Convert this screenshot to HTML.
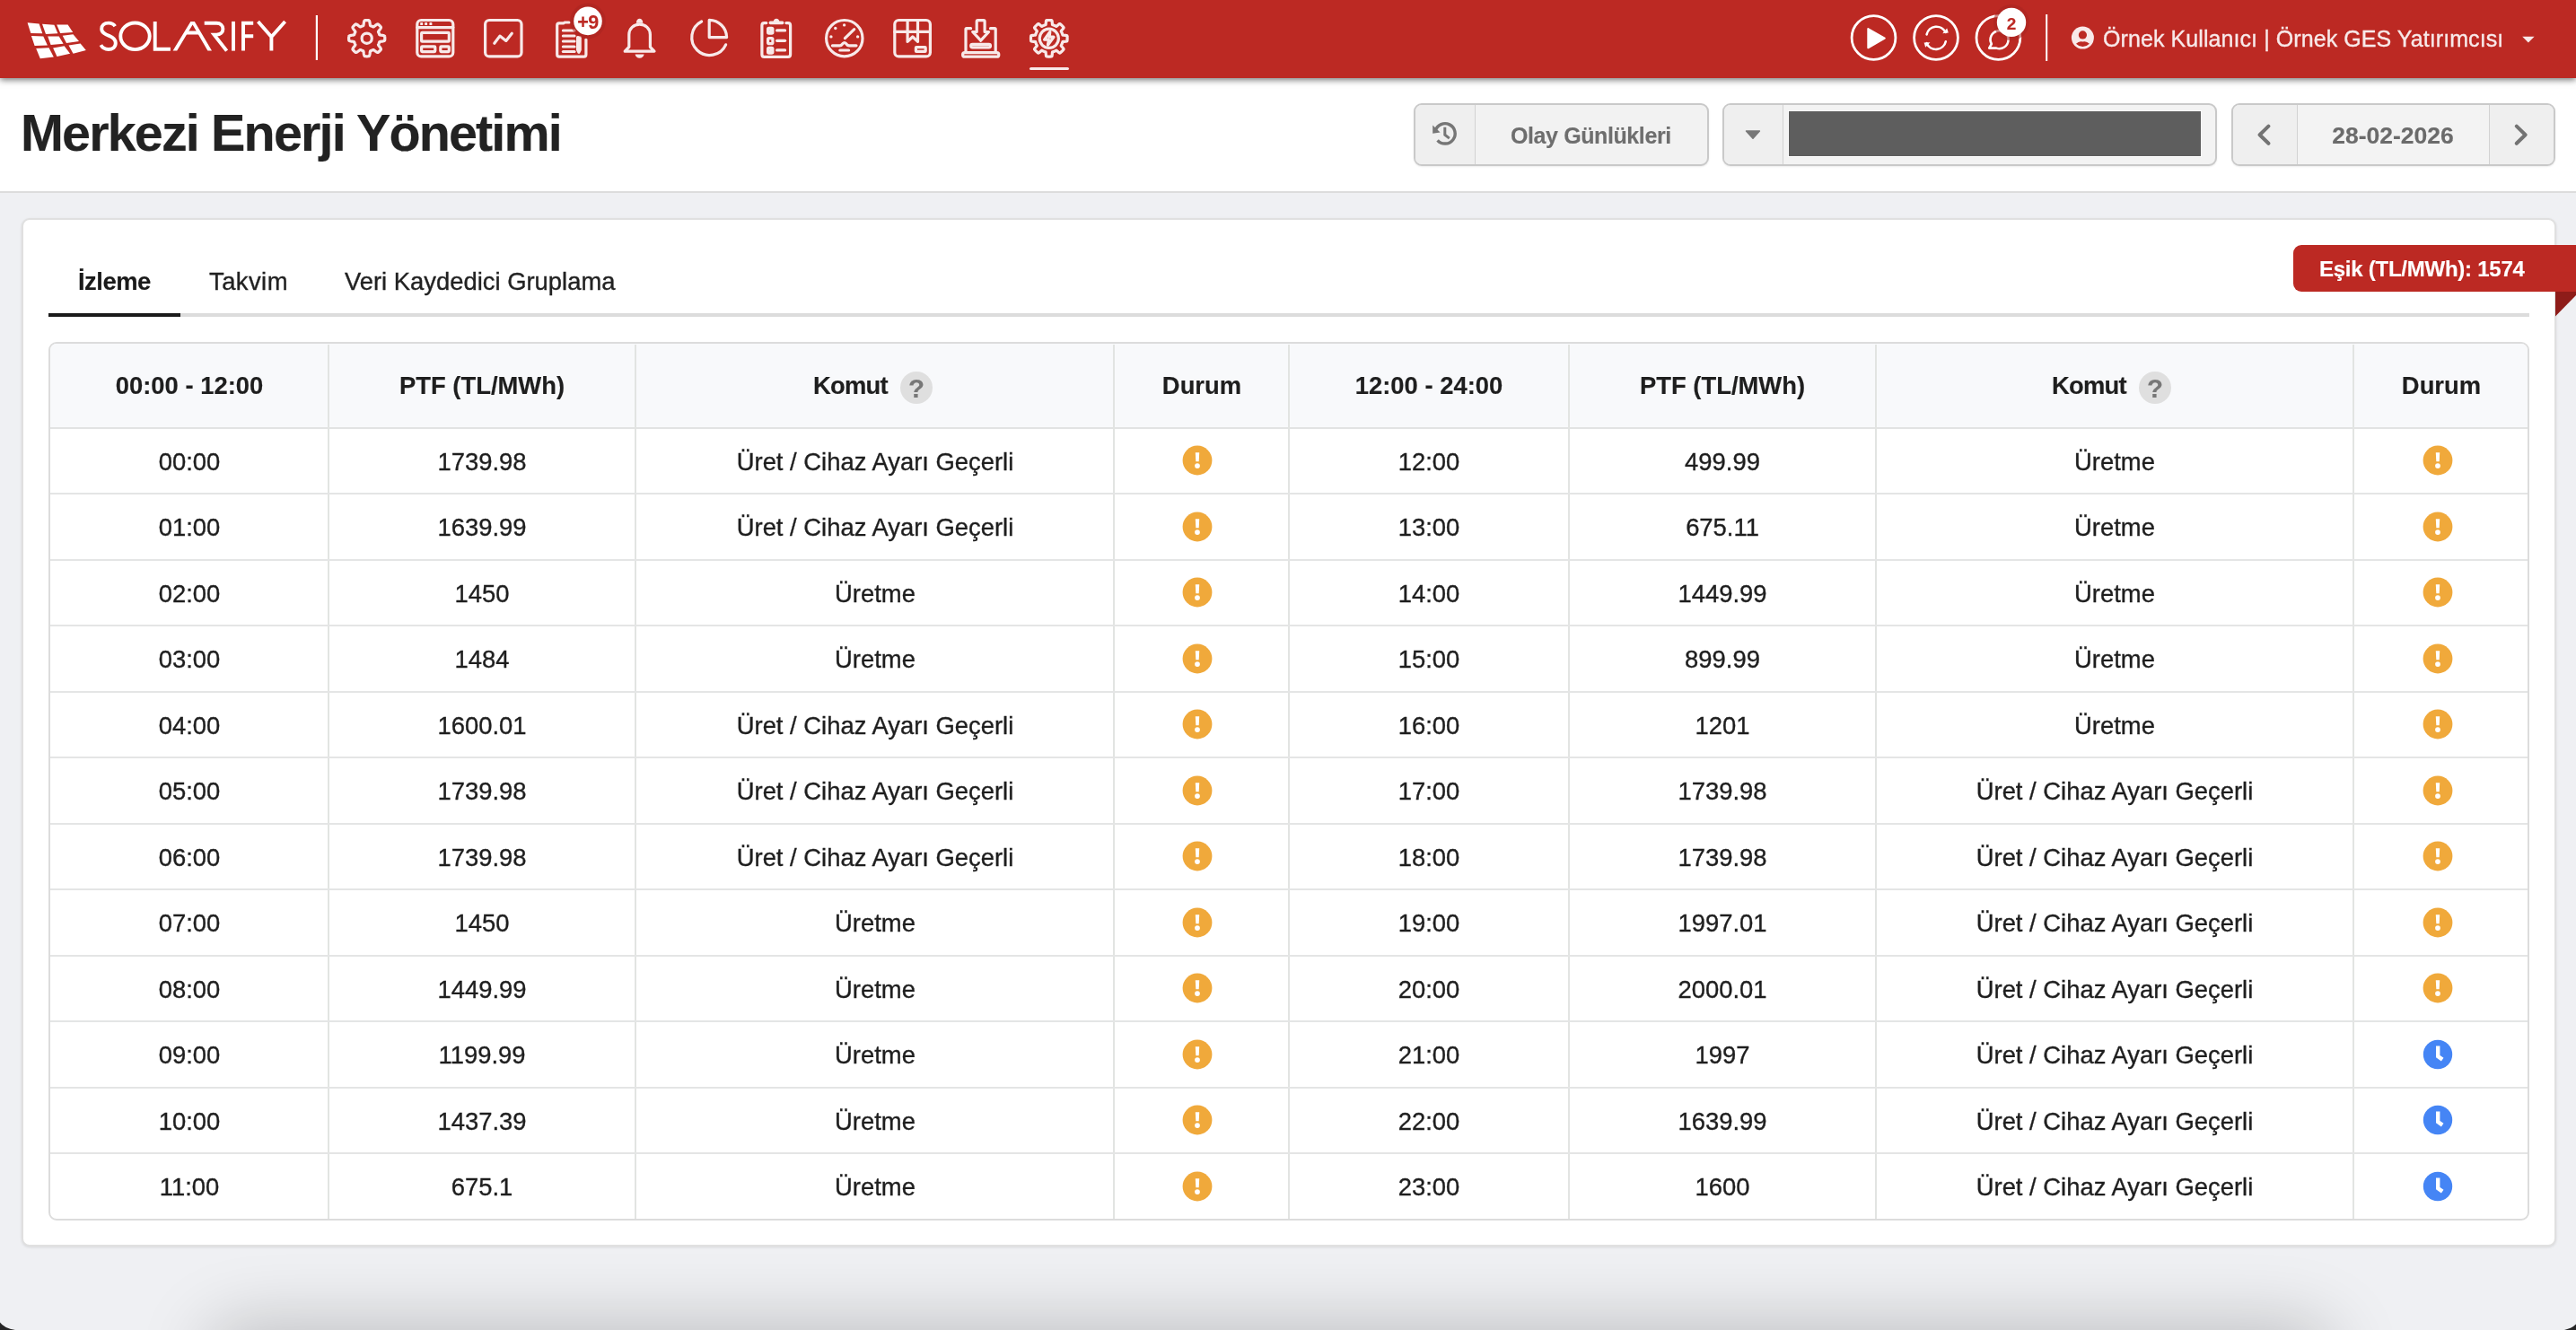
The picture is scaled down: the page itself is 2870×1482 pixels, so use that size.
<!DOCTYPE html><html><head><meta charset="utf-8"><title>Merkezi Enerji Yönetimi</title><style>
html,body{margin:0;padding:0;width:2870px;height:1482px;overflow:hidden;background:#1e1e1e;font-family:"Liberation Sans", sans-serif;}
#win{position:absolute;left:0;top:0;width:2870px;height:1482px;background:#eff0f3;overflow:hidden;}
.ab{position:absolute;}
</style></head><body><div id="win">
<div class="ab" style="left:0;top:87px;width:2870px;height:126px;background:#fff;border-bottom:2px solid #dcdcdc;"></div>
<div style="position:absolute;will-change:transform;-webkit-text-stroke:0.15px #222222;top:115.16px;font-size:57.5px;line-height:66.07px;font-weight:bold;color:#222222;white-space:nowrap;letter-spacing:-1.85px;left:22.80px;">Merkezi Enerji Yönetimi</div>
<div class="ab" style="left:1575px;top:115px;width:325px;height:66px;border:2px solid #c9c9c9;border-radius:9px;background:#f2f2f2;overflow:hidden;box-shadow:0 1px 2px rgba(0,0,0,0.08);"><div class="ab" style="left:0;top:0;width:66px;height:66px;background:#efefef;border-right:1.5px solid #d2d2d2;"></div></div>
<svg class="ab" style="left:1590px;top:130px" width="40" height="40" viewBox="0 0 40 40"><path fill="none" stroke="#767676" stroke-width="3.4" d="M11.6,26.3 A11.2,11.2 0 1 0 9.2,15.8"/><path fill="#767676" d="M6.2,9.6 L6.2,18.8 L14.6,17.6 Z"/><path fill="none" stroke="#767676" stroke-width="3" stroke-linecap="square" d="M19.8,13.2 V20.2 L23.6,23.2"/></svg>
<div style="position:absolute;will-change:transform;-webkit-text-stroke:0.15px #6e6e6e;top:136.68px;font-size:25px;line-height:28.73px;font-weight:bold;color:#6e6e6e;white-space:nowrap;letter-spacing:-0.4px;left:1682.80px;">Olay Günlükleri</div>
<div class="ab" style="left:1919px;top:115px;width:547px;height:66px;border:2px solid #c9c9c9;border-radius:9px;background:#f3f3f3;overflow:hidden;box-shadow:0 1px 2px rgba(0,0,0,0.08);"><div class="ab" style="left:0;top:0;width:64.5px;height:66px;background:#efefef;border-right:1.5px solid #d2d2d2;"></div><div class="ab" style="left:71px;top:5.5px;width:459px;height:50px;background:#5e5e5e;border:1px solid #fff;"></div></div>
<svg class="ab" style="left:1940px;top:140px" width="26" height="20" viewBox="0 0 26 20"><path fill="#777" stroke="#777" stroke-width="1.5" stroke-linejoin="round" d="M5.5,6 H20.4 L13,14.2 Z"/></svg>
<div class="ab" style="left:2486px;top:115px;width:357px;height:66px;border:2px solid #c9c9c9;border-radius:9px;background:#f3f3f3;overflow:hidden;box-shadow:0 1px 2px rgba(0,0,0,0.08);"><div class="ab" style="left:0;top:0;width:71px;height:66px;background:#efefef;border-right:1.5px solid #d2d2d2;"></div><div class="ab" style="left:285px;top:0;width:72px;height:66px;background:#efefef;border-left:1.5px solid #d2d2d2;"></div></div>
<svg class="ab" style="left:2505px;top:130px" width="330" height="40" viewBox="2505 130 330 40"><path fill="none" stroke="#737373" stroke-width="4" stroke-linecap="round" stroke-linejoin="round" d="M2527.4,140.6 L2517.6,150.2 L2527.4,159.8 M2803.8,140.6 L2813.6,150.2 L2803.8,159.8"/></svg>
<div style="position:absolute;will-change:transform;-webkit-text-stroke:0.15px #6b6b6b;top:135.72px;font-size:26.5px;line-height:30.45px;font-weight:bold;color:#6b6b6b;white-space:nowrap;left:666.40px;width:4000px;text-align:center;">28-02-2026</div>
<div class="ab" style="left:24px;top:243px;width:2820px;height:1142px;background:#fff;border:2px solid #e0e0e0;border-radius:9px;box-shadow:0 1px 3px rgba(0,0,0,0.10);"></div>
<div class="ab" style="left:54px;top:349px;width:2764px;height:4px;background:#dcdcdc;"></div>
<div class="ab" style="left:54px;top:349px;width:147px;height:4px;background:#1a1a1a;"></div>
<div style="position:absolute;will-change:transform;-webkit-text-stroke:0.15px #1a1a1a;top:297.70px;font-size:27.4px;line-height:31.48px;font-weight:bold;color:#1a1a1a;white-space:nowrap;letter-spacing:-0.5px;left:87.40px;">İzleme</div>
<div style="position:absolute;will-change:transform;-webkit-text-stroke:0.35px #222;top:297.70px;font-size:27.4px;line-height:31.48px;font-weight:normal;color:#222;white-space:nowrap;letter-spacing:0.45px;left:232.60px;">Takvim</div>
<div style="position:absolute;will-change:transform;-webkit-text-stroke:0.35px #222;top:297.70px;font-size:27.4px;line-height:31.48px;font-weight:normal;color:#222;white-space:nowrap;left:383.50px;">Veri Kaydedici Gruplama</div>
<div class="ab" style="left:2555px;top:273px;width:315px;height:52px;background:#bc2923;border-radius:9px 0 0 9px;"></div>
<svg class="ab" style="left:2847px;top:325px" width="23" height="28" viewBox="0 0 23 28"><path fill="#8e1c19" d="M0,0 H23 V4 L0,27.5 Z"/></svg>
<div style="position:absolute;will-change:transform;-webkit-text-stroke:0.15px #ffffff;top:286.28px;font-size:24px;line-height:27.58px;font-weight:bold;color:#ffffff;white-space:nowrap;letter-spacing:-0.25px;left:2584.00px;">Eşik (TL/MWh): 1574</div>
<div class="ab" style="left:54px;top:381px;width:2760px;height:975px;border:2px solid #dcdcdc;border-radius:9px;background:#fff;overflow:hidden;"><div class="ab" style="left:0;top:0;width:2760px;height:93px;background:#f8f9fb;border-bottom:2px solid #e2e3e3;"></div></div>
<div class="ab" style="left:365px;top:384px;width:2px;height:974px;background:#e2e4e2;"></div>
<div class="ab" style="left:707px;top:384px;width:2px;height:974px;background:#e2e4e2;"></div>
<div class="ab" style="left:1240px;top:384px;width:2px;height:974px;background:#e2e4e2;"></div>
<div class="ab" style="left:1435px;top:384px;width:2px;height:974px;background:#e2e4e2;"></div>
<div class="ab" style="left:1747px;top:384px;width:2px;height:974px;background:#e2e4e2;"></div>
<div class="ab" style="left:2089px;top:384px;width:2px;height:974px;background:#e2e4e2;"></div>
<div class="ab" style="left:2621px;top:384px;width:2px;height:974px;background:#e2e4e2;"></div>
<div class="ab" style="left:56px;top:549px;width:2760px;height:2px;background:#e4e5e5;"></div>
<div class="ab" style="left:56px;top:623px;width:2760px;height:2px;background:#e4e5e5;"></div>
<div class="ab" style="left:56px;top:696px;width:2760px;height:2px;background:#e4e5e5;"></div>
<div class="ab" style="left:56px;top:770px;width:2760px;height:2px;background:#e4e5e5;"></div>
<div class="ab" style="left:56px;top:843px;width:2760px;height:2px;background:#e4e5e5;"></div>
<div class="ab" style="left:56px;top:917px;width:2760px;height:2px;background:#e4e5e5;"></div>
<div class="ab" style="left:56px;top:990px;width:2760px;height:2px;background:#e4e5e5;"></div>
<div class="ab" style="left:56px;top:1064px;width:2760px;height:2px;background:#e4e5e5;"></div>
<div class="ab" style="left:56px;top:1137px;width:2760px;height:2px;background:#e4e5e5;"></div>
<div class="ab" style="left:56px;top:1211px;width:2760px;height:2px;background:#e4e5e5;"></div>
<div class="ab" style="left:56px;top:1284px;width:2760px;height:2px;background:#e4e5e5;"></div>
<div style="position:absolute;will-change:transform;-webkit-text-stroke:0.15px #1e1e1e;top:414.00px;font-size:27.4px;line-height:31.48px;font-weight:bold;color:#1e1e1e;white-space:nowrap;left:-1789.50px;width:4000px;text-align:center;">00:00 - 12:00</div>
<div style="position:absolute;will-change:transform;-webkit-text-stroke:0.15px #1e1e1e;top:414.00px;font-size:27.4px;line-height:31.48px;font-weight:bold;color:#1e1e1e;white-space:nowrap;left:-1463.00px;width:4000px;text-align:center;">PTF (TL/MWh)</div>
<div style="position:absolute;will-change:transform;-webkit-text-stroke:0.15px #1e1e1e;top:414.00px;font-size:27.4px;line-height:31.48px;font-weight:bold;color:#1e1e1e;white-space:nowrap;left:-661.50px;width:4000px;text-align:center;">Durum</div>
<div style="position:absolute;will-change:transform;-webkit-text-stroke:0.15px #1e1e1e;top:414.00px;font-size:27.4px;line-height:31.48px;font-weight:bold;color:#1e1e1e;white-space:nowrap;left:-408.00px;width:4000px;text-align:center;">12:00 - 24:00</div>
<div style="position:absolute;will-change:transform;-webkit-text-stroke:0.15px #1e1e1e;top:414.00px;font-size:27.4px;line-height:31.48px;font-weight:bold;color:#1e1e1e;white-space:nowrap;left:-81.00px;width:4000px;text-align:center;">PTF (TL/MWh)</div>
<div style="position:absolute;will-change:transform;-webkit-text-stroke:0.15px #1e1e1e;top:414.00px;font-size:27.4px;line-height:31.48px;font-weight:bold;color:#1e1e1e;white-space:nowrap;left:719.50px;width:4000px;text-align:center;">Durum</div>
<div style="position:absolute;will-change:transform;-webkit-text-stroke:0.15px #1e1e1e;top:414.00px;font-size:27.4px;line-height:31.48px;font-weight:bold;color:#1e1e1e;white-space:nowrap;letter-spacing:-0.8px;left:906.00px;">Komut</div><div class="ab" style="left:1002.9px;top:413.9px;width:36px;height:36px;border-radius:18px;background:#dfdfdf;"></div><div style="position:absolute;will-change:transform;-webkit-text-stroke:0.15px #777777;top:416.10px;font-size:29.5px;line-height:33.90px;font-weight:bold;color:#777777;white-space:nowrap;left:-978.80px;width:4000px;text-align:center;">?</div>
<div style="position:absolute;will-change:transform;-webkit-text-stroke:0.15px #1e1e1e;top:414.00px;font-size:27.4px;line-height:31.48px;font-weight:bold;color:#1e1e1e;white-space:nowrap;letter-spacing:-0.8px;left:2286.00px;">Komut</div><div class="ab" style="left:2383px;top:413.9px;width:36px;height:36px;border-radius:18px;background:#dfdfdf;"></div><div style="position:absolute;will-change:transform;-webkit-text-stroke:0.15px #777777;top:416.10px;font-size:29.5px;line-height:33.90px;font-weight:bold;color:#777777;white-space:nowrap;left:401.30px;width:4000px;text-align:center;">?</div>
<div style="position:absolute;will-change:transform;-webkit-text-stroke:0.35px #1e1e1e;top:498.80px;font-size:27.4px;line-height:31.48px;font-weight:normal;color:#1e1e1e;white-space:nowrap;left:-1789.50px;width:4000px;text-align:center;">00:00</div>
<div style="position:absolute;will-change:transform;-webkit-text-stroke:0.35px #1e1e1e;top:498.80px;font-size:27.4px;line-height:31.48px;font-weight:normal;color:#1e1e1e;white-space:nowrap;left:-1463.00px;width:4000px;text-align:center;">1739.98</div>
<div style="position:absolute;will-change:transform;-webkit-text-stroke:0.35px #1e1e1e;top:498.80px;font-size:27.4px;line-height:31.48px;font-weight:normal;color:#1e1e1e;white-space:nowrap;left:-1025.50px;width:4000px;text-align:center;">Üret / Cihaz Ayarı Geçerli</div>
<svg class="ab" style="left:1317.4px;top:496.29999999999995px" width="34" height="34" viewBox="0 0 34 34"><circle cx="17" cy="17" r="16.4" fill="#f0a93b"/><path fill="#fff" d="M14.8,8.2 H19.2 L18.7,18.3 H15.3 Z"/><circle cx="17" cy="23.1" r="2.9" fill="#fff"/></svg>
<div style="position:absolute;will-change:transform;-webkit-text-stroke:0.35px #1e1e1e;top:498.80px;font-size:27.4px;line-height:31.48px;font-weight:normal;color:#1e1e1e;white-space:nowrap;left:-408.00px;width:4000px;text-align:center;">12:00</div>
<div style="position:absolute;will-change:transform;-webkit-text-stroke:0.35px #1e1e1e;top:498.80px;font-size:27.4px;line-height:31.48px;font-weight:normal;color:#1e1e1e;white-space:nowrap;left:-81.00px;width:4000px;text-align:center;">499.99</div>
<div style="position:absolute;will-change:transform;-webkit-text-stroke:0.35px #1e1e1e;top:498.80px;font-size:27.4px;line-height:31.48px;font-weight:normal;color:#1e1e1e;white-space:nowrap;left:356.00px;width:4000px;text-align:center;">Üretme</div>
<svg class="ab" style="left:2699px;top:496.29999999999995px" width="34" height="34" viewBox="0 0 34 34"><circle cx="17" cy="17" r="16.4" fill="#f0a93b"/><path fill="#fff" d="M14.8,8.2 H19.2 L18.7,18.3 H15.3 Z"/><circle cx="17" cy="23.1" r="2.9" fill="#fff"/></svg>
<div style="position:absolute;will-change:transform;-webkit-text-stroke:0.35px #1e1e1e;top:572.30px;font-size:27.4px;line-height:31.48px;font-weight:normal;color:#1e1e1e;white-space:nowrap;left:-1789.50px;width:4000px;text-align:center;">01:00</div>
<div style="position:absolute;will-change:transform;-webkit-text-stroke:0.35px #1e1e1e;top:572.30px;font-size:27.4px;line-height:31.48px;font-weight:normal;color:#1e1e1e;white-space:nowrap;left:-1463.00px;width:4000px;text-align:center;">1639.99</div>
<div style="position:absolute;will-change:transform;-webkit-text-stroke:0.35px #1e1e1e;top:572.30px;font-size:27.4px;line-height:31.48px;font-weight:normal;color:#1e1e1e;white-space:nowrap;left:-1025.50px;width:4000px;text-align:center;">Üret / Cihaz Ayarı Geçerli</div>
<svg class="ab" style="left:1317.4px;top:569.8px" width="34" height="34" viewBox="0 0 34 34"><circle cx="17" cy="17" r="16.4" fill="#f0a93b"/><path fill="#fff" d="M14.8,8.2 H19.2 L18.7,18.3 H15.3 Z"/><circle cx="17" cy="23.1" r="2.9" fill="#fff"/></svg>
<div style="position:absolute;will-change:transform;-webkit-text-stroke:0.35px #1e1e1e;top:572.30px;font-size:27.4px;line-height:31.48px;font-weight:normal;color:#1e1e1e;white-space:nowrap;left:-408.00px;width:4000px;text-align:center;">13:00</div>
<div style="position:absolute;will-change:transform;-webkit-text-stroke:0.35px #1e1e1e;top:572.30px;font-size:27.4px;line-height:31.48px;font-weight:normal;color:#1e1e1e;white-space:nowrap;left:-81.00px;width:4000px;text-align:center;">675.11</div>
<div style="position:absolute;will-change:transform;-webkit-text-stroke:0.35px #1e1e1e;top:572.30px;font-size:27.4px;line-height:31.48px;font-weight:normal;color:#1e1e1e;white-space:nowrap;left:356.00px;width:4000px;text-align:center;">Üretme</div>
<svg class="ab" style="left:2699px;top:569.8px" width="34" height="34" viewBox="0 0 34 34"><circle cx="17" cy="17" r="16.4" fill="#f0a93b"/><path fill="#fff" d="M14.8,8.2 H19.2 L18.7,18.3 H15.3 Z"/><circle cx="17" cy="23.1" r="2.9" fill="#fff"/></svg>
<div style="position:absolute;will-change:transform;-webkit-text-stroke:0.35px #1e1e1e;top:645.80px;font-size:27.4px;line-height:31.48px;font-weight:normal;color:#1e1e1e;white-space:nowrap;left:-1789.50px;width:4000px;text-align:center;">02:00</div>
<div style="position:absolute;will-change:transform;-webkit-text-stroke:0.35px #1e1e1e;top:645.80px;font-size:27.4px;line-height:31.48px;font-weight:normal;color:#1e1e1e;white-space:nowrap;left:-1463.00px;width:4000px;text-align:center;">1450</div>
<div style="position:absolute;will-change:transform;-webkit-text-stroke:0.35px #1e1e1e;top:645.80px;font-size:27.4px;line-height:31.48px;font-weight:normal;color:#1e1e1e;white-space:nowrap;left:-1025.50px;width:4000px;text-align:center;">Üretme</div>
<svg class="ab" style="left:1317.4px;top:643.3px" width="34" height="34" viewBox="0 0 34 34"><circle cx="17" cy="17" r="16.4" fill="#f0a93b"/><path fill="#fff" d="M14.8,8.2 H19.2 L18.7,18.3 H15.3 Z"/><circle cx="17" cy="23.1" r="2.9" fill="#fff"/></svg>
<div style="position:absolute;will-change:transform;-webkit-text-stroke:0.35px #1e1e1e;top:645.80px;font-size:27.4px;line-height:31.48px;font-weight:normal;color:#1e1e1e;white-space:nowrap;left:-408.00px;width:4000px;text-align:center;">14:00</div>
<div style="position:absolute;will-change:transform;-webkit-text-stroke:0.35px #1e1e1e;top:645.80px;font-size:27.4px;line-height:31.48px;font-weight:normal;color:#1e1e1e;white-space:nowrap;left:-81.00px;width:4000px;text-align:center;">1449.99</div>
<div style="position:absolute;will-change:transform;-webkit-text-stroke:0.35px #1e1e1e;top:645.80px;font-size:27.4px;line-height:31.48px;font-weight:normal;color:#1e1e1e;white-space:nowrap;left:356.00px;width:4000px;text-align:center;">Üretme</div>
<svg class="ab" style="left:2699px;top:643.3px" width="34" height="34" viewBox="0 0 34 34"><circle cx="17" cy="17" r="16.4" fill="#f0a93b"/><path fill="#fff" d="M14.8,8.2 H19.2 L18.7,18.3 H15.3 Z"/><circle cx="17" cy="23.1" r="2.9" fill="#fff"/></svg>
<div style="position:absolute;will-change:transform;-webkit-text-stroke:0.35px #1e1e1e;top:719.30px;font-size:27.4px;line-height:31.48px;font-weight:normal;color:#1e1e1e;white-space:nowrap;left:-1789.50px;width:4000px;text-align:center;">03:00</div>
<div style="position:absolute;will-change:transform;-webkit-text-stroke:0.35px #1e1e1e;top:719.30px;font-size:27.4px;line-height:31.48px;font-weight:normal;color:#1e1e1e;white-space:nowrap;left:-1463.00px;width:4000px;text-align:center;">1484</div>
<div style="position:absolute;will-change:transform;-webkit-text-stroke:0.35px #1e1e1e;top:719.30px;font-size:27.4px;line-height:31.48px;font-weight:normal;color:#1e1e1e;white-space:nowrap;left:-1025.50px;width:4000px;text-align:center;">Üretme</div>
<svg class="ab" style="left:1317.4px;top:716.8px" width="34" height="34" viewBox="0 0 34 34"><circle cx="17" cy="17" r="16.4" fill="#f0a93b"/><path fill="#fff" d="M14.8,8.2 H19.2 L18.7,18.3 H15.3 Z"/><circle cx="17" cy="23.1" r="2.9" fill="#fff"/></svg>
<div style="position:absolute;will-change:transform;-webkit-text-stroke:0.35px #1e1e1e;top:719.30px;font-size:27.4px;line-height:31.48px;font-weight:normal;color:#1e1e1e;white-space:nowrap;left:-408.00px;width:4000px;text-align:center;">15:00</div>
<div style="position:absolute;will-change:transform;-webkit-text-stroke:0.35px #1e1e1e;top:719.30px;font-size:27.4px;line-height:31.48px;font-weight:normal;color:#1e1e1e;white-space:nowrap;left:-81.00px;width:4000px;text-align:center;">899.99</div>
<div style="position:absolute;will-change:transform;-webkit-text-stroke:0.35px #1e1e1e;top:719.30px;font-size:27.4px;line-height:31.48px;font-weight:normal;color:#1e1e1e;white-space:nowrap;left:356.00px;width:4000px;text-align:center;">Üretme</div>
<svg class="ab" style="left:2699px;top:716.8px" width="34" height="34" viewBox="0 0 34 34"><circle cx="17" cy="17" r="16.4" fill="#f0a93b"/><path fill="#fff" d="M14.8,8.2 H19.2 L18.7,18.3 H15.3 Z"/><circle cx="17" cy="23.1" r="2.9" fill="#fff"/></svg>
<div style="position:absolute;will-change:transform;-webkit-text-stroke:0.35px #1e1e1e;top:792.80px;font-size:27.4px;line-height:31.48px;font-weight:normal;color:#1e1e1e;white-space:nowrap;left:-1789.50px;width:4000px;text-align:center;">04:00</div>
<div style="position:absolute;will-change:transform;-webkit-text-stroke:0.35px #1e1e1e;top:792.80px;font-size:27.4px;line-height:31.48px;font-weight:normal;color:#1e1e1e;white-space:nowrap;left:-1463.00px;width:4000px;text-align:center;">1600.01</div>
<div style="position:absolute;will-change:transform;-webkit-text-stroke:0.35px #1e1e1e;top:792.80px;font-size:27.4px;line-height:31.48px;font-weight:normal;color:#1e1e1e;white-space:nowrap;left:-1025.50px;width:4000px;text-align:center;">Üret / Cihaz Ayarı Geçerli</div>
<svg class="ab" style="left:1317.4px;top:790.3px" width="34" height="34" viewBox="0 0 34 34"><circle cx="17" cy="17" r="16.4" fill="#f0a93b"/><path fill="#fff" d="M14.8,8.2 H19.2 L18.7,18.3 H15.3 Z"/><circle cx="17" cy="23.1" r="2.9" fill="#fff"/></svg>
<div style="position:absolute;will-change:transform;-webkit-text-stroke:0.35px #1e1e1e;top:792.80px;font-size:27.4px;line-height:31.48px;font-weight:normal;color:#1e1e1e;white-space:nowrap;left:-408.00px;width:4000px;text-align:center;">16:00</div>
<div style="position:absolute;will-change:transform;-webkit-text-stroke:0.35px #1e1e1e;top:792.80px;font-size:27.4px;line-height:31.48px;font-weight:normal;color:#1e1e1e;white-space:nowrap;left:-81.00px;width:4000px;text-align:center;">1201</div>
<div style="position:absolute;will-change:transform;-webkit-text-stroke:0.35px #1e1e1e;top:792.80px;font-size:27.4px;line-height:31.48px;font-weight:normal;color:#1e1e1e;white-space:nowrap;left:356.00px;width:4000px;text-align:center;">Üretme</div>
<svg class="ab" style="left:2699px;top:790.3px" width="34" height="34" viewBox="0 0 34 34"><circle cx="17" cy="17" r="16.4" fill="#f0a93b"/><path fill="#fff" d="M14.8,8.2 H19.2 L18.7,18.3 H15.3 Z"/><circle cx="17" cy="23.1" r="2.9" fill="#fff"/></svg>
<div style="position:absolute;will-change:transform;-webkit-text-stroke:0.35px #1e1e1e;top:866.30px;font-size:27.4px;line-height:31.48px;font-weight:normal;color:#1e1e1e;white-space:nowrap;left:-1789.50px;width:4000px;text-align:center;">05:00</div>
<div style="position:absolute;will-change:transform;-webkit-text-stroke:0.35px #1e1e1e;top:866.30px;font-size:27.4px;line-height:31.48px;font-weight:normal;color:#1e1e1e;white-space:nowrap;left:-1463.00px;width:4000px;text-align:center;">1739.98</div>
<div style="position:absolute;will-change:transform;-webkit-text-stroke:0.35px #1e1e1e;top:866.30px;font-size:27.4px;line-height:31.48px;font-weight:normal;color:#1e1e1e;white-space:nowrap;left:-1025.50px;width:4000px;text-align:center;">Üret / Cihaz Ayarı Geçerli</div>
<svg class="ab" style="left:1317.4px;top:863.8px" width="34" height="34" viewBox="0 0 34 34"><circle cx="17" cy="17" r="16.4" fill="#f0a93b"/><path fill="#fff" d="M14.8,8.2 H19.2 L18.7,18.3 H15.3 Z"/><circle cx="17" cy="23.1" r="2.9" fill="#fff"/></svg>
<div style="position:absolute;will-change:transform;-webkit-text-stroke:0.35px #1e1e1e;top:866.30px;font-size:27.4px;line-height:31.48px;font-weight:normal;color:#1e1e1e;white-space:nowrap;left:-408.00px;width:4000px;text-align:center;">17:00</div>
<div style="position:absolute;will-change:transform;-webkit-text-stroke:0.35px #1e1e1e;top:866.30px;font-size:27.4px;line-height:31.48px;font-weight:normal;color:#1e1e1e;white-space:nowrap;left:-81.00px;width:4000px;text-align:center;">1739.98</div>
<div style="position:absolute;will-change:transform;-webkit-text-stroke:0.35px #1e1e1e;top:866.30px;font-size:27.4px;line-height:31.48px;font-weight:normal;color:#1e1e1e;white-space:nowrap;left:356.00px;width:4000px;text-align:center;">Üret / Cihaz Ayarı Geçerli</div>
<svg class="ab" style="left:2699px;top:863.8px" width="34" height="34" viewBox="0 0 34 34"><circle cx="17" cy="17" r="16.4" fill="#f0a93b"/><path fill="#fff" d="M14.8,8.2 H19.2 L18.7,18.3 H15.3 Z"/><circle cx="17" cy="23.1" r="2.9" fill="#fff"/></svg>
<div style="position:absolute;will-change:transform;-webkit-text-stroke:0.35px #1e1e1e;top:939.80px;font-size:27.4px;line-height:31.48px;font-weight:normal;color:#1e1e1e;white-space:nowrap;left:-1789.50px;width:4000px;text-align:center;">06:00</div>
<div style="position:absolute;will-change:transform;-webkit-text-stroke:0.35px #1e1e1e;top:939.80px;font-size:27.4px;line-height:31.48px;font-weight:normal;color:#1e1e1e;white-space:nowrap;left:-1463.00px;width:4000px;text-align:center;">1739.98</div>
<div style="position:absolute;will-change:transform;-webkit-text-stroke:0.35px #1e1e1e;top:939.80px;font-size:27.4px;line-height:31.48px;font-weight:normal;color:#1e1e1e;white-space:nowrap;left:-1025.50px;width:4000px;text-align:center;">Üret / Cihaz Ayarı Geçerli</div>
<svg class="ab" style="left:1317.4px;top:937.3px" width="34" height="34" viewBox="0 0 34 34"><circle cx="17" cy="17" r="16.4" fill="#f0a93b"/><path fill="#fff" d="M14.8,8.2 H19.2 L18.7,18.3 H15.3 Z"/><circle cx="17" cy="23.1" r="2.9" fill="#fff"/></svg>
<div style="position:absolute;will-change:transform;-webkit-text-stroke:0.35px #1e1e1e;top:939.80px;font-size:27.4px;line-height:31.48px;font-weight:normal;color:#1e1e1e;white-space:nowrap;left:-408.00px;width:4000px;text-align:center;">18:00</div>
<div style="position:absolute;will-change:transform;-webkit-text-stroke:0.35px #1e1e1e;top:939.80px;font-size:27.4px;line-height:31.48px;font-weight:normal;color:#1e1e1e;white-space:nowrap;left:-81.00px;width:4000px;text-align:center;">1739.98</div>
<div style="position:absolute;will-change:transform;-webkit-text-stroke:0.35px #1e1e1e;top:939.80px;font-size:27.4px;line-height:31.48px;font-weight:normal;color:#1e1e1e;white-space:nowrap;left:356.00px;width:4000px;text-align:center;">Üret / Cihaz Ayarı Geçerli</div>
<svg class="ab" style="left:2699px;top:937.3px" width="34" height="34" viewBox="0 0 34 34"><circle cx="17" cy="17" r="16.4" fill="#f0a93b"/><path fill="#fff" d="M14.8,8.2 H19.2 L18.7,18.3 H15.3 Z"/><circle cx="17" cy="23.1" r="2.9" fill="#fff"/></svg>
<div style="position:absolute;will-change:transform;-webkit-text-stroke:0.35px #1e1e1e;top:1013.30px;font-size:27.4px;line-height:31.48px;font-weight:normal;color:#1e1e1e;white-space:nowrap;left:-1789.50px;width:4000px;text-align:center;">07:00</div>
<div style="position:absolute;will-change:transform;-webkit-text-stroke:0.35px #1e1e1e;top:1013.30px;font-size:27.4px;line-height:31.48px;font-weight:normal;color:#1e1e1e;white-space:nowrap;left:-1463.00px;width:4000px;text-align:center;">1450</div>
<div style="position:absolute;will-change:transform;-webkit-text-stroke:0.35px #1e1e1e;top:1013.30px;font-size:27.4px;line-height:31.48px;font-weight:normal;color:#1e1e1e;white-space:nowrap;left:-1025.50px;width:4000px;text-align:center;">Üretme</div>
<svg class="ab" style="left:1317.4px;top:1010.8px" width="34" height="34" viewBox="0 0 34 34"><circle cx="17" cy="17" r="16.4" fill="#f0a93b"/><path fill="#fff" d="M14.8,8.2 H19.2 L18.7,18.3 H15.3 Z"/><circle cx="17" cy="23.1" r="2.9" fill="#fff"/></svg>
<div style="position:absolute;will-change:transform;-webkit-text-stroke:0.35px #1e1e1e;top:1013.30px;font-size:27.4px;line-height:31.48px;font-weight:normal;color:#1e1e1e;white-space:nowrap;left:-408.00px;width:4000px;text-align:center;">19:00</div>
<div style="position:absolute;will-change:transform;-webkit-text-stroke:0.35px #1e1e1e;top:1013.30px;font-size:27.4px;line-height:31.48px;font-weight:normal;color:#1e1e1e;white-space:nowrap;left:-81.00px;width:4000px;text-align:center;">1997.01</div>
<div style="position:absolute;will-change:transform;-webkit-text-stroke:0.35px #1e1e1e;top:1013.30px;font-size:27.4px;line-height:31.48px;font-weight:normal;color:#1e1e1e;white-space:nowrap;left:356.00px;width:4000px;text-align:center;">Üret / Cihaz Ayarı Geçerli</div>
<svg class="ab" style="left:2699px;top:1010.8px" width="34" height="34" viewBox="0 0 34 34"><circle cx="17" cy="17" r="16.4" fill="#f0a93b"/><path fill="#fff" d="M14.8,8.2 H19.2 L18.7,18.3 H15.3 Z"/><circle cx="17" cy="23.1" r="2.9" fill="#fff"/></svg>
<div style="position:absolute;will-change:transform;-webkit-text-stroke:0.35px #1e1e1e;top:1086.80px;font-size:27.4px;line-height:31.48px;font-weight:normal;color:#1e1e1e;white-space:nowrap;left:-1789.50px;width:4000px;text-align:center;">08:00</div>
<div style="position:absolute;will-change:transform;-webkit-text-stroke:0.35px #1e1e1e;top:1086.80px;font-size:27.4px;line-height:31.48px;font-weight:normal;color:#1e1e1e;white-space:nowrap;left:-1463.00px;width:4000px;text-align:center;">1449.99</div>
<div style="position:absolute;will-change:transform;-webkit-text-stroke:0.35px #1e1e1e;top:1086.80px;font-size:27.4px;line-height:31.48px;font-weight:normal;color:#1e1e1e;white-space:nowrap;left:-1025.50px;width:4000px;text-align:center;">Üretme</div>
<svg class="ab" style="left:1317.4px;top:1084.3px" width="34" height="34" viewBox="0 0 34 34"><circle cx="17" cy="17" r="16.4" fill="#f0a93b"/><path fill="#fff" d="M14.8,8.2 H19.2 L18.7,18.3 H15.3 Z"/><circle cx="17" cy="23.1" r="2.9" fill="#fff"/></svg>
<div style="position:absolute;will-change:transform;-webkit-text-stroke:0.35px #1e1e1e;top:1086.80px;font-size:27.4px;line-height:31.48px;font-weight:normal;color:#1e1e1e;white-space:nowrap;left:-408.00px;width:4000px;text-align:center;">20:00</div>
<div style="position:absolute;will-change:transform;-webkit-text-stroke:0.35px #1e1e1e;top:1086.80px;font-size:27.4px;line-height:31.48px;font-weight:normal;color:#1e1e1e;white-space:nowrap;left:-81.00px;width:4000px;text-align:center;">2000.01</div>
<div style="position:absolute;will-change:transform;-webkit-text-stroke:0.35px #1e1e1e;top:1086.80px;font-size:27.4px;line-height:31.48px;font-weight:normal;color:#1e1e1e;white-space:nowrap;left:356.00px;width:4000px;text-align:center;">Üret / Cihaz Ayarı Geçerli</div>
<svg class="ab" style="left:2699px;top:1084.3px" width="34" height="34" viewBox="0 0 34 34"><circle cx="17" cy="17" r="16.4" fill="#f0a93b"/><path fill="#fff" d="M14.8,8.2 H19.2 L18.7,18.3 H15.3 Z"/><circle cx="17" cy="23.1" r="2.9" fill="#fff"/></svg>
<div style="position:absolute;will-change:transform;-webkit-text-stroke:0.35px #1e1e1e;top:1160.30px;font-size:27.4px;line-height:31.48px;font-weight:normal;color:#1e1e1e;white-space:nowrap;left:-1789.50px;width:4000px;text-align:center;">09:00</div>
<div style="position:absolute;will-change:transform;-webkit-text-stroke:0.35px #1e1e1e;top:1160.30px;font-size:27.4px;line-height:31.48px;font-weight:normal;color:#1e1e1e;white-space:nowrap;left:-1463.00px;width:4000px;text-align:center;">1199.99</div>
<div style="position:absolute;will-change:transform;-webkit-text-stroke:0.35px #1e1e1e;top:1160.30px;font-size:27.4px;line-height:31.48px;font-weight:normal;color:#1e1e1e;white-space:nowrap;left:-1025.50px;width:4000px;text-align:center;">Üretme</div>
<svg class="ab" style="left:1317.4px;top:1157.8px" width="34" height="34" viewBox="0 0 34 34"><circle cx="17" cy="17" r="16.4" fill="#f0a93b"/><path fill="#fff" d="M14.8,8.2 H19.2 L18.7,18.3 H15.3 Z"/><circle cx="17" cy="23.1" r="2.9" fill="#fff"/></svg>
<div style="position:absolute;will-change:transform;-webkit-text-stroke:0.35px #1e1e1e;top:1160.30px;font-size:27.4px;line-height:31.48px;font-weight:normal;color:#1e1e1e;white-space:nowrap;left:-408.00px;width:4000px;text-align:center;">21:00</div>
<div style="position:absolute;will-change:transform;-webkit-text-stroke:0.35px #1e1e1e;top:1160.30px;font-size:27.4px;line-height:31.48px;font-weight:normal;color:#1e1e1e;white-space:nowrap;left:-81.00px;width:4000px;text-align:center;">1997</div>
<div style="position:absolute;will-change:transform;-webkit-text-stroke:0.35px #1e1e1e;top:1160.30px;font-size:27.4px;line-height:31.48px;font-weight:normal;color:#1e1e1e;white-space:nowrap;left:356.00px;width:4000px;text-align:center;">Üret / Cihaz Ayarı Geçerli</div>
<svg class="ab" style="left:2699px;top:1157.8px" width="34" height="34" viewBox="0 0 34 34"><circle cx="17" cy="17" r="16.2" fill="#4585f5"/><path fill="none" stroke="#fff" stroke-width="4.4" stroke-linejoin="miter" d="M17.2,7.6 V19 L22.2,22.6"/></svg>
<div style="position:absolute;will-change:transform;-webkit-text-stroke:0.35px #1e1e1e;top:1233.80px;font-size:27.4px;line-height:31.48px;font-weight:normal;color:#1e1e1e;white-space:nowrap;left:-1789.50px;width:4000px;text-align:center;">10:00</div>
<div style="position:absolute;will-change:transform;-webkit-text-stroke:0.35px #1e1e1e;top:1233.80px;font-size:27.4px;line-height:31.48px;font-weight:normal;color:#1e1e1e;white-space:nowrap;left:-1463.00px;width:4000px;text-align:center;">1437.39</div>
<div style="position:absolute;will-change:transform;-webkit-text-stroke:0.35px #1e1e1e;top:1233.80px;font-size:27.4px;line-height:31.48px;font-weight:normal;color:#1e1e1e;white-space:nowrap;left:-1025.50px;width:4000px;text-align:center;">Üretme</div>
<svg class="ab" style="left:1317.4px;top:1231.3px" width="34" height="34" viewBox="0 0 34 34"><circle cx="17" cy="17" r="16.4" fill="#f0a93b"/><path fill="#fff" d="M14.8,8.2 H19.2 L18.7,18.3 H15.3 Z"/><circle cx="17" cy="23.1" r="2.9" fill="#fff"/></svg>
<div style="position:absolute;will-change:transform;-webkit-text-stroke:0.35px #1e1e1e;top:1233.80px;font-size:27.4px;line-height:31.48px;font-weight:normal;color:#1e1e1e;white-space:nowrap;left:-408.00px;width:4000px;text-align:center;">22:00</div>
<div style="position:absolute;will-change:transform;-webkit-text-stroke:0.35px #1e1e1e;top:1233.80px;font-size:27.4px;line-height:31.48px;font-weight:normal;color:#1e1e1e;white-space:nowrap;left:-81.00px;width:4000px;text-align:center;">1639.99</div>
<div style="position:absolute;will-change:transform;-webkit-text-stroke:0.35px #1e1e1e;top:1233.80px;font-size:27.4px;line-height:31.48px;font-weight:normal;color:#1e1e1e;white-space:nowrap;left:356.00px;width:4000px;text-align:center;">Üret / Cihaz Ayarı Geçerli</div>
<svg class="ab" style="left:2699px;top:1231.3px" width="34" height="34" viewBox="0 0 34 34"><circle cx="17" cy="17" r="16.2" fill="#4585f5"/><path fill="none" stroke="#fff" stroke-width="4.4" stroke-linejoin="miter" d="M17.2,7.6 V19 L22.2,22.6"/></svg>
<div style="position:absolute;will-change:transform;-webkit-text-stroke:0.35px #1e1e1e;top:1307.30px;font-size:27.4px;line-height:31.48px;font-weight:normal;color:#1e1e1e;white-space:nowrap;left:-1789.50px;width:4000px;text-align:center;">11:00</div>
<div style="position:absolute;will-change:transform;-webkit-text-stroke:0.35px #1e1e1e;top:1307.30px;font-size:27.4px;line-height:31.48px;font-weight:normal;color:#1e1e1e;white-space:nowrap;left:-1463.00px;width:4000px;text-align:center;">675.1</div>
<div style="position:absolute;will-change:transform;-webkit-text-stroke:0.35px #1e1e1e;top:1307.30px;font-size:27.4px;line-height:31.48px;font-weight:normal;color:#1e1e1e;white-space:nowrap;left:-1025.50px;width:4000px;text-align:center;">Üretme</div>
<svg class="ab" style="left:1317.4px;top:1304.8px" width="34" height="34" viewBox="0 0 34 34"><circle cx="17" cy="17" r="16.4" fill="#f0a93b"/><path fill="#fff" d="M14.8,8.2 H19.2 L18.7,18.3 H15.3 Z"/><circle cx="17" cy="23.1" r="2.9" fill="#fff"/></svg>
<div style="position:absolute;will-change:transform;-webkit-text-stroke:0.35px #1e1e1e;top:1307.30px;font-size:27.4px;line-height:31.48px;font-weight:normal;color:#1e1e1e;white-space:nowrap;left:-408.00px;width:4000px;text-align:center;">23:00</div>
<div style="position:absolute;will-change:transform;-webkit-text-stroke:0.35px #1e1e1e;top:1307.30px;font-size:27.4px;line-height:31.48px;font-weight:normal;color:#1e1e1e;white-space:nowrap;left:-81.00px;width:4000px;text-align:center;">1600</div>
<div style="position:absolute;will-change:transform;-webkit-text-stroke:0.35px #1e1e1e;top:1307.30px;font-size:27.4px;line-height:31.48px;font-weight:normal;color:#1e1e1e;white-space:nowrap;left:356.00px;width:4000px;text-align:center;">Üret / Cihaz Ayarı Geçerli</div>
<svg class="ab" style="left:2699px;top:1304.8px" width="34" height="34" viewBox="0 0 34 34"><circle cx="17" cy="17" r="16.2" fill="#4585f5"/><path fill="none" stroke="#fff" stroke-width="4.4" stroke-linejoin="miter" d="M17.2,7.6 V19 L22.2,22.6"/></svg>
<div class="ab" style="left:250px;top:1497px;width:2330px;height:40px;border-radius:20px;box-shadow:0 0 80px 20px rgba(0,0,0,0.22);"></div>
<svg class="ab" style="left:0;top:1460px" width="2870" height="22" viewBox="0 1460 2870 22"><path fill="#262626" d="M0,1473.5 Q4.5,1480 17,1482 H0 Z M2870,1475.5 Q2865.5,1480 2857,1482 H2870 Z"/></svg>
<div class="ab" style="left:0;top:0;width:2870px;height:87px;background:#bc2923;box-shadow:0 2px 7px rgba(0,0,0,0.55);">
<svg width="2870" height="87" viewBox="0 0 2870 87" style="position:absolute;left:0;top:0">
<polygon fill="#fff" points="30.6,25.2 43.6,26.5 47.3,37.3 34.3,37"/>
<polygon fill="#fff" points="47,26.8 60.4,27.7 64.4,37.3 51,38"/>
<polygon fill="#fff" points="63.2,27.4 75.6,27.4 81.2,36.1 67.2,37"/>
<polygon fill="#fff" points="34.9,40.1 48.3,40.4 52.9,50.4 38.6,51"/>
<polygon fill="#fff" points="53.2,40.4 65.7,40.4 70.6,48.8 56.6,50"/>
<polygon fill="#fff" points="69.7,39.8 81.5,38.3 88,46 74,47.9"/>
<polygon fill="#fff" points="40.2,54.1 54.5,53.2 59.8,63.4 44.8,65.3"/>
<polygon fill="#fff" points="59.1,53.5 71.6,51.3 78.1,59.7 63.5,63.1"/>
<polygon fill="#fff" points="76.5,50.4 89.6,48.5 95.8,56 81.5,59.7"/>
<path fill="none" stroke="#fff" stroke-width="3.9" d="M128.2,29.2 C126.5,26.5 123.8,25.6 121,25.6 C116,25.6 113.2,28.6 113.2,32.2 C113.2,36.6 117.6,38.3 121.6,39.9 C126,41.7 128.8,43.6 128.8,48 C128.8,52.4 125.4,55 120.8,55 C117.2,55 114,53.2 112.4,50.2"/>
<ellipse fill="none" stroke="#fff" stroke-width="3.9" cx="150.5" cy="40.3" rx="16.2" ry="14.8"/>
<path fill="none" stroke="#fff" stroke-width="3.9" d="M172.7,23.9 V54.7 H189.9" stroke-linecap="butt"/>
<polygon fill="#fff" points="192.6,56.6 212.4,23.9 216.8,23.9 236,56.6 231.4,56.6 214.6,27.6 197.2,56.6"/>
<polygon fill="#fff" points="209.6,34.6 219.6,34.6 221.8,38.4 207.4,38.4"/>
<path fill="none" stroke="#fff" stroke-width="3.9" d="M227.7,25.8 H241.2 C245.6,25.8 248.4,28.5 248.4,32.3 C248.4,36 245.6,38.6 241.2,38.6 H238.5 L252.6,56.6" stroke-linejoin="miter"/>
<path fill="none" stroke="#fff" stroke-width="3.9" d="M260,23.9 V56.6"/>
<path fill="none" stroke="#fff" stroke-width="3.9" d="M271,56.6 V25.8 H282.2 M271,40.2 H282.2"/>
<path fill="none" stroke="#fff" stroke-width="3.9" d="M287.5,24 L302.4,41 L317.6,24 M302.4,41 V56.6"/>
<rect x="351.8" y="17" width="2.2" height="50" fill="#fff"/>
<path fill="none" stroke="#f8e9e9" stroke-width="3.2" stroke-linecap="round" stroke-linejoin="round" d="M408.70,22.60 L408.88,22.60 L409.05,22.60 L409.23,22.61 L409.40,22.61 L409.58,22.62 L409.75,22.63 L409.93,22.64 L410.10,22.65 L410.28,22.66 L410.45,22.68 L410.63,22.69 L410.80,22.71 L410.97,22.75 L411.14,22.85 L411.29,23.01 L411.44,23.22 L411.57,23.49 L411.69,23.81 L411.80,24.18 L411.90,24.58 L411.98,25.01 L412.05,25.46 L412.12,25.91 L412.17,26.36 L412.23,26.79 L412.28,27.19 L412.34,27.56 L412.40,27.88 L412.46,28.15 L412.54,28.37 L412.63,28.53 L412.73,28.64 L412.85,28.70 L412.97,28.74 L413.09,28.78 L413.21,28.81 L413.33,28.85 L413.45,28.90 L413.57,28.94 L413.69,28.98 L413.81,29.02 L413.93,29.07 L414.05,29.12 L414.17,29.16 L414.29,29.21 L414.40,29.26 L414.52,29.31 L414.64,29.36 L414.75,29.41 L414.87,29.47 L414.99,29.52 L415.10,29.58 L415.21,29.63 L415.33,29.69 L415.44,29.75 L415.55,29.81 L415.67,29.87 L415.79,29.91 L415.94,29.90 L416.12,29.85 L416.33,29.75 L416.57,29.61 L416.84,29.42 L417.14,29.20 L417.46,28.95 L417.80,28.69 L418.16,28.41 L418.52,28.14 L418.89,27.87 L419.25,27.63 L419.61,27.41 L419.94,27.23 L420.25,27.09 L420.54,26.99 L420.79,26.94 L421.01,26.94 L421.20,26.99 L421.35,27.08 L421.49,27.19 L421.62,27.30 L421.75,27.42 L421.89,27.53 L422.02,27.65 L422.15,27.76 L422.28,27.88 L422.41,28.00 L422.54,28.12 L422.66,28.24 L422.79,28.36 L422.91,28.49 L423.04,28.61 L423.16,28.74 L423.28,28.86 L423.40,28.99 L423.52,29.12 L423.64,29.25 L423.75,29.38 L423.87,29.51 L423.98,29.65 L424.10,29.78 L424.21,29.91 L424.32,30.05 L424.41,30.20 L424.46,30.39 L424.46,30.61 L424.41,30.86 L424.31,31.15 L424.17,31.46 L423.99,31.79 L423.77,32.15 L423.53,32.51 L423.26,32.88 L422.99,33.24 L422.71,33.60 L422.45,33.94 L422.20,34.26 L421.98,34.56 L421.79,34.83 L421.65,35.07 L421.55,35.28 L421.50,35.46 L421.49,35.61 L421.53,35.73 L421.59,35.85 L421.65,35.96 L421.71,36.07 L421.77,36.19 L421.82,36.30 L421.88,36.41 L421.93,36.53 L421.99,36.65 L422.04,36.76 L422.09,36.88 L422.14,37.00 L422.19,37.11 L422.24,37.23 L422.28,37.35 L422.33,37.47 L422.38,37.59 L422.42,37.71 L422.46,37.83 L422.50,37.95 L422.55,38.07 L422.59,38.19 L422.62,38.31 L422.66,38.43 L422.70,38.55 L422.76,38.67 L422.87,38.77 L423.03,38.86 L423.25,38.94 L423.52,39.00 L423.84,39.06 L424.21,39.12 L424.61,39.17 L425.04,39.23 L425.49,39.28 L425.94,39.35 L426.39,39.42 L426.82,39.50 L427.22,39.60 L427.59,39.71 L427.91,39.83 L428.18,39.96 L428.39,40.11 L428.55,40.26 L428.65,40.43 L428.69,40.60 L428.71,40.77 L428.72,40.95 L428.74,41.12 L428.75,41.30 L428.76,41.47 L428.77,41.65 L428.78,41.82 L428.79,42.00 L428.79,42.17 L428.80,42.35 L428.80,42.52 L428.80,42.70 L428.80,42.88 L428.80,43.05 L428.79,43.23 L428.79,43.40 L428.78,43.58 L428.77,43.75 L428.76,43.93 L428.75,44.10 L428.74,44.28 L428.72,44.45 L428.71,44.63 L428.69,44.80 L428.65,44.97 L428.55,45.14 L428.39,45.29 L428.18,45.44 L427.91,45.57 L427.59,45.69 L427.22,45.80 L426.82,45.90 L426.39,45.98 L425.94,46.05 L425.49,46.12 L425.04,46.17 L424.61,46.23 L424.21,46.28 L423.84,46.34 L423.52,46.40 L423.25,46.46 L423.03,46.54 L422.87,46.63 L422.76,46.73 L422.70,46.85 L422.66,46.97 L422.62,47.09 L422.59,47.21 L422.55,47.33 L422.50,47.45 L422.46,47.57 L422.42,47.69 L422.38,47.81 L422.33,47.93 L422.28,48.05 L422.24,48.17 L422.19,48.29 L422.14,48.40 L422.09,48.52 L422.04,48.64 L421.99,48.75 L421.93,48.87 L421.88,48.99 L421.82,49.10 L421.77,49.21 L421.71,49.33 L421.65,49.44 L421.59,49.55 L421.53,49.67 L421.49,49.79 L421.50,49.94 L421.55,50.12 L421.65,50.33 L421.79,50.57 L421.98,50.84 L422.20,51.14 L422.45,51.46 L422.71,51.80 L422.99,52.16 L423.26,52.52 L423.53,52.89 L423.77,53.25 L423.99,53.61 L424.17,53.94 L424.31,54.25 L424.41,54.54 L424.46,54.79 L424.46,55.01 L424.41,55.20 L424.32,55.35 L424.21,55.49 L424.10,55.62 L423.98,55.75 L423.87,55.89 L423.75,56.02 L423.64,56.15 L423.52,56.28 L423.40,56.41 L423.28,56.54 L423.16,56.66 L423.04,56.79 L422.91,56.91 L422.79,57.04 L422.66,57.16 L422.54,57.28 L422.41,57.40 L422.28,57.52 L422.15,57.64 L422.02,57.75 L421.89,57.87 L421.75,57.98 L421.62,58.10 L421.49,58.21 L421.35,58.32 L421.20,58.41 L421.01,58.46 L420.79,58.46 L420.54,58.41 L420.25,58.31 L419.94,58.17 L419.61,57.99 L419.25,57.77 L418.89,57.53 L418.52,57.26 L418.16,56.99 L417.80,56.71 L417.46,56.45 L417.14,56.20 L416.84,55.98 L416.57,55.79 L416.33,55.65 L416.12,55.55 L415.94,55.50 L415.79,55.49 L415.67,55.53 L415.55,55.59 L415.44,55.65 L415.33,55.71 L415.21,55.77 L415.10,55.82 L414.99,55.88 L414.87,55.93 L414.75,55.99 L414.64,56.04 L414.52,56.09 L414.40,56.14 L414.29,56.19 L414.17,56.24 L414.05,56.28 L413.93,56.33 L413.81,56.38 L413.69,56.42 L413.57,56.46 L413.45,56.50 L413.33,56.55 L413.21,56.59 L413.09,56.62 L412.97,56.66 L412.85,56.70 L412.73,56.76 L412.63,56.87 L412.54,57.03 L412.46,57.25 L412.40,57.52 L412.34,57.84 L412.28,58.21 L412.23,58.61 L412.17,59.04 L412.12,59.49 L412.05,59.94 L411.98,60.39 L411.90,60.82 L411.80,61.22 L411.69,61.59 L411.57,61.91 L411.44,62.18 L411.29,62.39 L411.14,62.55 L410.97,62.65 L410.80,62.69 L410.63,62.71 L410.45,62.72 L410.28,62.74 L410.10,62.75 L409.93,62.76 L409.75,62.77 L409.58,62.78 L409.40,62.79 L409.23,62.79 L409.05,62.80 L408.88,62.80 L408.70,62.80 L408.52,62.80 L408.35,62.80 L408.17,62.79 L408.00,62.79 L407.82,62.78 L407.65,62.77 L407.47,62.76 L407.30,62.75 L407.12,62.74 L406.95,62.72 L406.77,62.71 L406.60,62.69 L406.43,62.65 L406.26,62.55 L406.11,62.39 L405.96,62.18 L405.83,61.91 L405.71,61.59 L405.60,61.22 L405.50,60.82 L405.42,60.39 L405.35,59.94 L405.28,59.49 L405.23,59.04 L405.17,58.61 L405.12,58.21 L405.06,57.84 L405.00,57.52 L404.94,57.25 L404.86,57.03 L404.77,56.87 L404.67,56.76 L404.55,56.70 L404.43,56.66 L404.31,56.62 L404.19,56.59 L404.07,56.55 L403.95,56.50 L403.83,56.46 L403.71,56.42 L403.59,56.38 L403.47,56.33 L403.35,56.28 L403.23,56.24 L403.11,56.19 L403.00,56.14 L402.88,56.09 L402.76,56.04 L402.65,55.99 L402.53,55.93 L402.41,55.88 L402.30,55.82 L402.19,55.77 L402.07,55.71 L401.96,55.65 L401.85,55.59 L401.73,55.53 L401.61,55.49 L401.46,55.50 L401.28,55.55 L401.07,55.65 L400.83,55.79 L400.56,55.98 L400.26,56.20 L399.94,56.45 L399.60,56.71 L399.24,56.99 L398.88,57.26 L398.51,57.53 L398.15,57.77 L397.79,57.99 L397.46,58.17 L397.15,58.31 L396.86,58.41 L396.61,58.46 L396.39,58.46 L396.20,58.41 L396.05,58.32 L395.91,58.21 L395.78,58.10 L395.65,57.98 L395.51,57.87 L395.38,57.75 L395.25,57.64 L395.12,57.52 L394.99,57.40 L394.86,57.28 L394.74,57.16 L394.61,57.04 L394.49,56.91 L394.36,56.79 L394.24,56.66 L394.12,56.54 L394.00,56.41 L393.88,56.28 L393.76,56.15 L393.65,56.02 L393.53,55.89 L393.42,55.75 L393.30,55.62 L393.19,55.49 L393.08,55.35 L392.99,55.20 L392.94,55.01 L392.94,54.79 L392.99,54.54 L393.09,54.25 L393.23,53.94 L393.41,53.61 L393.63,53.25 L393.87,52.89 L394.14,52.52 L394.41,52.16 L394.69,51.80 L394.95,51.46 L395.20,51.14 L395.42,50.84 L395.61,50.57 L395.75,50.33 L395.85,50.12 L395.90,49.94 L395.91,49.79 L395.87,49.67 L395.81,49.55 L395.75,49.44 L395.69,49.33 L395.63,49.21 L395.58,49.10 L395.52,48.99 L395.47,48.87 L395.41,48.75 L395.36,48.64 L395.31,48.52 L395.26,48.40 L395.21,48.29 L395.16,48.17 L395.12,48.05 L395.07,47.93 L395.02,47.81 L394.98,47.69 L394.94,47.57 L394.90,47.45 L394.85,47.33 L394.81,47.21 L394.78,47.09 L394.74,46.97 L394.70,46.85 L394.64,46.73 L394.53,46.63 L394.37,46.54 L394.15,46.46 L393.88,46.40 L393.56,46.34 L393.19,46.28 L392.79,46.23 L392.36,46.17 L391.91,46.12 L391.46,46.05 L391.01,45.98 L390.58,45.90 L390.18,45.80 L389.81,45.69 L389.49,45.57 L389.22,45.44 L389.01,45.29 L388.85,45.14 L388.75,44.97 L388.71,44.80 L388.69,44.63 L388.68,44.45 L388.66,44.28 L388.65,44.10 L388.64,43.93 L388.63,43.75 L388.62,43.58 L388.61,43.40 L388.61,43.23 L388.60,43.05 L388.60,42.88 L388.60,42.70 L388.60,42.52 L388.60,42.35 L388.61,42.17 L388.61,42.00 L388.62,41.82 L388.63,41.65 L388.64,41.47 L388.65,41.30 L388.66,41.12 L388.68,40.95 L388.69,40.77 L388.71,40.60 L388.75,40.43 L388.85,40.26 L389.01,40.11 L389.22,39.96 L389.49,39.83 L389.81,39.71 L390.18,39.60 L390.58,39.50 L391.01,39.42 L391.46,39.35 L391.91,39.28 L392.36,39.23 L392.79,39.17 L393.19,39.12 L393.56,39.06 L393.88,39.00 L394.15,38.94 L394.37,38.86 L394.53,38.77 L394.64,38.67 L394.70,38.55 L394.74,38.43 L394.78,38.31 L394.81,38.19 L394.85,38.07 L394.90,37.95 L394.94,37.83 L394.98,37.71 L395.02,37.59 L395.07,37.47 L395.12,37.35 L395.16,37.23 L395.21,37.11 L395.26,37.00 L395.31,36.88 L395.36,36.76 L395.41,36.65 L395.47,36.53 L395.52,36.41 L395.58,36.30 L395.63,36.19 L395.69,36.07 L395.75,35.96 L395.81,35.85 L395.87,35.73 L395.91,35.61 L395.90,35.46 L395.85,35.28 L395.75,35.07 L395.61,34.83 L395.42,34.56 L395.20,34.26 L394.95,33.94 L394.69,33.60 L394.41,33.24 L394.14,32.88 L393.87,32.51 L393.63,32.15 L393.41,31.79 L393.23,31.46 L393.09,31.15 L392.99,30.86 L392.94,30.61 L392.94,30.39 L392.99,30.20 L393.08,30.05 L393.19,29.91 L393.30,29.78 L393.42,29.65 L393.53,29.51 L393.65,29.38 L393.76,29.25 L393.88,29.12 L394.00,28.99 L394.12,28.86 L394.24,28.74 L394.36,28.61 L394.49,28.49 L394.61,28.36 L394.74,28.24 L394.86,28.12 L394.99,28.00 L395.12,27.88 L395.25,27.76 L395.38,27.65 L395.51,27.53 L395.65,27.42 L395.78,27.30 L395.91,27.19 L396.05,27.08 L396.20,26.99 L396.39,26.94 L396.61,26.94 L396.86,26.99 L397.15,27.09 L397.46,27.23 L397.79,27.41 L398.15,27.63 L398.51,27.87 L398.88,28.14 L399.24,28.41 L399.60,28.69 L399.94,28.95 L400.26,29.20 L400.56,29.42 L400.83,29.61 L401.07,29.75 L401.28,29.85 L401.46,29.90 L401.61,29.91 L401.73,29.87 L401.85,29.81 L401.96,29.75 L402.07,29.69 L402.19,29.63 L402.30,29.58 L402.41,29.52 L402.53,29.47 L402.65,29.41 L402.76,29.36 L402.88,29.31 L403.00,29.26 L403.11,29.21 L403.23,29.16 L403.35,29.12 L403.47,29.07 L403.59,29.02 L403.71,28.98 L403.83,28.94 L403.95,28.90 L404.07,28.85 L404.19,28.81 L404.31,28.78 L404.43,28.74 L404.55,28.70 L404.67,28.64 L404.77,28.53 L404.86,28.37 L404.94,28.15 L405.00,27.88 L405.06,27.56 L405.12,27.19 L405.17,26.79 L405.23,26.36 L405.28,25.91 L405.35,25.46 L405.42,25.01 L405.50,24.58 L405.60,24.18 L405.71,23.81 L405.83,23.49 L405.96,23.22 L406.11,23.01 L406.26,22.85 L406.43,22.75 L406.60,22.71 L406.77,22.69 L406.95,22.68 L407.12,22.66 L407.30,22.65 L407.47,22.64 L407.65,22.63 L407.82,22.62 L408.00,22.61 L408.17,22.61 L408.35,22.60 L408.52,22.60Z"/>
<circle fill="none" stroke="#f8e9e9" stroke-width="3.2" stroke-linecap="round" stroke-linejoin="round" cx="408.7" cy="42.7" r="5.6"/>
<rect fill="none" stroke="#f8e9e9" stroke-width="3.2" stroke-linecap="round" stroke-linejoin="round" x="464.8" y="22.5" width="40" height="40.4" rx="4.5"/>
<path fill="none" stroke="#f8e9e9" stroke-width="3.2" stroke-linecap="round" stroke-linejoin="round" d="M464.8,30.6 H504.8"/>
<rect fill="#f8e9e9" x="468.2" y="25.1" width="3" height="3" rx="0.6"/>
<rect fill="#f8e9e9" x="473.1" y="25.1" width="3" height="3" rx="0.6"/>
<rect fill="#f8e9e9" x="478.4" y="25.1" width="3" height="3" rx="0.6"/>
<rect fill="none" stroke="#f8e9e9" stroke-width="3.2" stroke-linecap="round" stroke-linejoin="round" x="469.6" y="36.4" width="30.7" height="9.8" rx="0.8"/>
<rect fill="none" stroke="#f8e9e9" stroke-width="3.2" stroke-linecap="round" stroke-linejoin="round" x="469.6" y="51.9" width="15.2" height="5.7" rx="0.8"/>
<rect fill="none" stroke="#f8e9e9" stroke-width="3.2" stroke-linecap="round" stroke-linejoin="round" x="490.8" y="51.9" width="9.5" height="5.7" rx="0.8"/>
<rect fill="none" stroke="#f8e9e9" stroke-width="3.2" stroke-linecap="round" stroke-linejoin="round" x="540.6" y="22.5" width="40.4" height="40.4" rx="4.5"/>
<path fill="none" stroke="#f8e9e9" stroke-width="3.2" stroke-linecap="round" stroke-linejoin="round" d="M550.8,48.2 L556.9,40.1 L563.8,45.4 L570.3,37.2"/>
<path fill="none" stroke="#f8e9e9" stroke-width="3.2" stroke-linecap="round" stroke-linejoin="round" d="M628,25.8 H623 Q620.7,25.8 620.7,28.2 V60.8 Q620.7,63.2 623,63.2 H650.6 Q652.9,63.2 652.9,60.8 V44"/>
<path fill="none" stroke="#f8e9e9" stroke-width="3.2" stroke-linecap="round" stroke-linejoin="round" d="M629,25 H634"/>
<path fill="none" stroke="#f8e9e9" stroke-width="3.2" stroke-linecap="round" stroke-linejoin="round" stroke-width="2.2" d="M627.4,34 H640"/>
<path fill="none" stroke="#f8e9e9" stroke-width="3.2" stroke-linecap="round" stroke-linejoin="round" stroke-width="2.2" d="M627.4,40 H640"/>
<path fill="none" stroke="#f8e9e9" stroke-width="3.2" stroke-linecap="round" stroke-linejoin="round" stroke-width="2.2" d="M627.4,46 H640"/>
<path fill="none" stroke="#f8e9e9" stroke-width="3.2" stroke-linecap="round" stroke-linejoin="round" stroke-width="2.2" d="M627.4,52 H640"/>
<path fill="none" stroke="#f8e9e9" stroke-width="3.2" stroke-linecap="round" stroke-linejoin="round" stroke-width="2.2" d="M627.4,57.5 H640"/>
<path fill="none" stroke="#f8e9e9" stroke-width="3.2" stroke-linecap="round" stroke-linejoin="round" stroke-width="1.5" d="M643.6,41.5 V55.6 L644.9,58.2 L646.2,55.6 V41.5 Z"/>
<path fill="none" stroke="#f8e9e9" stroke-width="3.2" stroke-linecap="round" stroke-linejoin="round" d="M700.8,52.4 V38.6 C700.8,31.8 706,27.2 712.6,27.2 C719.2,27.2 724.4,31.8 724.4,38.6 V52.4 L729,57.2 H696.2 Z"/>
<path fill="#f8e9e9" d="M707.6,60.6 H717.6 C717.2,63.2 715.2,64.8 712.6,64.8 C710,64.8 708,63.2 707.6,60.6 Z"/>
<path fill="#f8e9e9" d="M708.8,25.8 C709,22.2 710.6,20.8 712.6,20.8 C714.6,20.8 716.2,22.2 716.4,25.8 Z"/>
<path fill="none" stroke="#f8e9e9" stroke-width="3.2" stroke-linecap="round" stroke-linejoin="round" d="M781.6,24 A19.8,19.8 0 1 0 808.6,49.8"/>
<path fill="none" stroke="#f8e9e9" stroke-width="3.2" stroke-linecap="round" stroke-linejoin="round" d="M790.2,22.4 A19.4,19.4 0 0 1 809.6,41.6 H790.2 Z"/>
<path fill="none" stroke="#f8e9e9" stroke-width="3.2" stroke-linecap="round" stroke-linejoin="round" d="M853.8,25.6 H851.5 Q848.9,25.6 848.9,28.3 V60.7 Q848.9,63.3 851.5,63.3 H878 Q880.6,63.3 880.6,60.7 V28.3 Q880.6,25.6 878,25.6 H875.9"/>
<rect fill="#f8e9e9" x="856.6" y="23.6" width="16.8" height="3.6" rx="1.6"/>
<path fill="#f8e9e9" d="M861.6,24 Q862.4,20.8 865,20.8 Q867.6,20.8 868.4,24 Z"/>
<rect fill="none" stroke="#f8e9e9" stroke-width="3.2" stroke-linecap="round" stroke-linejoin="round" stroke-width="1.9" x="855.6" y="31.3" width="5.3" height="5.9" rx="1.2"/>
<path fill="none" stroke="#f8e9e9" stroke-width="3.2" stroke-linecap="round" stroke-linejoin="round" stroke-width="1.8" d="M857.3,35.9 L860,32.9"/>
<path fill="none" stroke="#f8e9e9" stroke-width="3.2" stroke-linecap="round" stroke-linejoin="round" stroke-width="2.1" d="M865.6,33.9 H874.6"/>
<rect fill="none" stroke="#f8e9e9" stroke-width="3.2" stroke-linecap="round" stroke-linejoin="round" stroke-width="1.9" x="855.6" y="42.7" width="5.3" height="5.9" rx="1.2"/>
<path fill="none" stroke="#f8e9e9" stroke-width="3.2" stroke-linecap="round" stroke-linejoin="round" stroke-width="2.1" d="M865.6,45.300000000000004 H874.6"/>
<rect fill="none" stroke="#f8e9e9" stroke-width="3.2" stroke-linecap="round" stroke-linejoin="round" stroke-width="1.9" x="855.6" y="53.3" width="5.3" height="5.9" rx="1.2"/>
<path fill="none" stroke="#f8e9e9" stroke-width="3.2" stroke-linecap="round" stroke-linejoin="round" stroke-width="1.8" d="M857.3,57.9 L860,54.9"/>
<path fill="none" stroke="#f8e9e9" stroke-width="3.2" stroke-linecap="round" stroke-linejoin="round" stroke-width="2.1" d="M865.6,55.9 H874.6"/>
<circle fill="none" stroke="#f8e9e9" stroke-width="3.2" stroke-linecap="round" stroke-linejoin="round" cx="940.8" cy="42.7" r="20.2"/>
<path fill="none" stroke="#f8e9e9" stroke-width="3.2" stroke-linecap="round" stroke-linejoin="round" d="M941.4,42.6 L951.7,32.6"/>
<circle fill="#f8e9e9" cx="925.9" cy="40.9" r="1.7"/>
<circle fill="#f8e9e9" cx="930.8" cy="31.5" r="1.7"/>
<circle fill="#f8e9e9" cx="940.6" cy="27.9" r="1.7"/>
<circle fill="#f8e9e9" cx="955.6" cy="40.9" r="1.7"/>
<path fill="none" stroke="#f8e9e9" stroke-width="3.2" stroke-linecap="round" stroke-linejoin="round" d="M927.4,50.8 H935.6 Q937.6,50.8 939,48.6 Q940.8,46.4 942.6,48.6 Q944,50.8 946,50.8 H954"/>
<path fill="none" stroke="#f8e9e9" stroke-width="3.2" stroke-linecap="round" stroke-linejoin="round" d="M935.8,56 H945.6"/>
<rect fill="none" stroke="#f8e9e9" stroke-width="3.2" stroke-linecap="round" stroke-linejoin="round" x="996.8" y="22.5" width="39.6" height="40.4" rx="4.5"/>
<path fill="none" stroke="#f8e9e9" stroke-width="3.2" stroke-linecap="round" stroke-linejoin="round" d="M996.8,35.4 H1036.4 M1011.1,22.5 V46.4 L1016.8,41 L1022.5,46.4 V22.5"/>
<rect fill="none" stroke="#f8e9e9" stroke-width="3.2" stroke-linecap="round" stroke-linejoin="round" x="1020.4" y="52.7" width="10.8" height="4.6" rx="0.6"/>
<rect fill="none" stroke="#f8e9e9" stroke-width="3.2" stroke-linecap="round" stroke-linejoin="round" x="1072.6" y="58.6" width="40.2" height="4.6" rx="2.3"/>
<path fill="none" stroke="#f8e9e9" stroke-width="3.2" stroke-linecap="round" stroke-linejoin="round" d="M1081.6,31.7 H1076.9 Q1076,31.7 1076,32.6 V57.6 M1103.5,31.7 H1108.2 Q1109.2,31.7 1109.2,32.6 V57.6"/>
<path fill="none" stroke="#f8e9e9" stroke-width="3.2" stroke-linecap="round" stroke-linejoin="round" d="M1088.2,35.5 V23.9 Q1088.2,22.6 1089.5,22.6 H1095.8 Q1097.1,22.6 1097.1,23.9 V35.5 H1101.6 L1092.7,45.2 L1083.7,35.5 Z"/>
<rect fill="none" stroke="#f8e9e9" stroke-width="3.2" stroke-linecap="round" stroke-linejoin="round" stroke-width="2.6" x="1081.7" y="49.3" width="21.8" height="3.6" rx="1.8"/>
<path fill="none" stroke="#f8e9e9" stroke-width="3.2" stroke-linecap="round" stroke-linejoin="round" d="M1168.80,22.50 L1168.98,22.50 L1169.15,22.50 L1169.33,22.51 L1169.51,22.51 L1169.69,22.52 L1169.86,22.53 L1170.04,22.54 L1170.22,22.55 L1170.39,22.56 L1170.57,22.58 L1170.75,22.59 L1170.92,22.61 L1171.10,22.63 L1171.27,22.65 L1171.45,22.67 L1171.63,22.70 L1171.80,22.76 L1171.94,22.96 L1172.06,23.30 L1172.16,23.76 L1172.23,24.30 L1172.28,24.89 L1172.32,25.50 L1172.35,26.09 L1172.39,26.63 L1172.43,27.08 L1172.49,27.42 L1172.58,27.63 L1172.71,27.70 L1172.84,27.73 L1172.97,27.77 L1173.10,27.80 L1173.23,27.84 L1173.36,27.88 L1173.49,27.92 L1173.62,27.96 L1173.75,28.01 L1173.88,28.05 L1174.01,28.09 L1174.14,28.14 L1174.26,28.19 L1174.39,28.24 L1174.52,28.29 L1174.64,28.34 L1174.77,28.39 L1174.90,28.44 L1175.02,28.49 L1175.15,28.55 L1175.27,28.60 L1175.39,28.66 L1175.52,28.72 L1175.64,28.78 L1175.76,28.84 L1175.88,28.90 L1176.00,28.96 L1176.12,29.03 L1176.24,29.09 L1176.36,29.16 L1176.48,29.22 L1176.60,29.29 L1176.72,29.36 L1176.85,29.40 L1177.06,29.32 L1177.35,29.12 L1177.70,28.83 L1178.10,28.47 L1178.54,28.08 L1179.00,27.67 L1179.46,27.29 L1179.89,26.96 L1180.28,26.71 L1180.61,26.55 L1180.85,26.51 L1181.02,26.59 L1181.16,26.69 L1181.30,26.80 L1181.44,26.91 L1181.58,27.02 L1181.71,27.14 L1181.85,27.25 L1181.98,27.36 L1182.12,27.48 L1182.25,27.60 L1182.38,27.71 L1182.51,27.83 L1182.64,27.95 L1182.77,28.07 L1182.90,28.20 L1183.03,28.32 L1183.15,28.45 L1183.28,28.57 L1183.40,28.70 L1183.53,28.83 L1183.65,28.96 L1183.77,29.09 L1183.89,29.22 L1184.00,29.35 L1184.12,29.48 L1184.24,29.62 L1184.35,29.75 L1184.46,29.89 L1184.58,30.02 L1184.69,30.16 L1184.80,30.30 L1184.91,30.44 L1185.01,30.58 L1185.09,30.75 L1185.05,30.99 L1184.89,31.32 L1184.64,31.71 L1184.31,32.14 L1183.93,32.60 L1183.52,33.06 L1183.13,33.50 L1182.77,33.90 L1182.48,34.25 L1182.28,34.54 L1182.20,34.75 L1182.24,34.88 L1182.31,35.00 L1182.38,35.12 L1182.44,35.24 L1182.51,35.36 L1182.57,35.48 L1182.64,35.60 L1182.70,35.72 L1182.76,35.84 L1182.82,35.96 L1182.88,36.08 L1182.94,36.21 L1183.00,36.33 L1183.05,36.45 L1183.11,36.58 L1183.16,36.70 L1183.21,36.83 L1183.26,36.96 L1183.31,37.08 L1183.36,37.21 L1183.41,37.34 L1183.46,37.46 L1183.51,37.59 L1183.55,37.72 L1183.59,37.85 L1183.64,37.98 L1183.68,38.11 L1183.72,38.24 L1183.76,38.37 L1183.80,38.50 L1183.83,38.63 L1183.87,38.76 L1183.90,38.89 L1183.97,39.02 L1184.18,39.11 L1184.52,39.17 L1184.97,39.21 L1185.51,39.25 L1186.10,39.28 L1186.71,39.32 L1187.30,39.37 L1187.84,39.44 L1188.30,39.54 L1188.64,39.66 L1188.84,39.80 L1188.90,39.97 L1188.93,40.15 L1188.95,40.33 L1188.97,40.50 L1188.99,40.68 L1189.01,40.85 L1189.02,41.03 L1189.04,41.21 L1189.05,41.38 L1189.06,41.56 L1189.07,41.74 L1189.08,41.91 L1189.09,42.09 L1189.09,42.27 L1189.10,42.45 L1189.10,42.62 L1189.10,42.80 L1189.10,42.98 L1189.10,43.15 L1189.09,43.33 L1189.09,43.51 L1189.08,43.69 L1189.07,43.86 L1189.06,44.04 L1189.05,44.22 L1189.04,44.39 L1189.02,44.57 L1189.01,44.75 L1188.99,44.92 L1188.97,45.10 L1188.95,45.27 L1188.93,45.45 L1188.90,45.63 L1188.84,45.80 L1188.64,45.94 L1188.30,46.06 L1187.84,46.16 L1187.30,46.23 L1186.71,46.28 L1186.10,46.32 L1185.51,46.35 L1184.97,46.39 L1184.52,46.43 L1184.18,46.49 L1183.97,46.58 L1183.90,46.71 L1183.87,46.84 L1183.83,46.97 L1183.80,47.10 L1183.76,47.23 L1183.72,47.36 L1183.68,47.49 L1183.64,47.62 L1183.59,47.75 L1183.55,47.88 L1183.51,48.01 L1183.46,48.14 L1183.41,48.26 L1183.36,48.39 L1183.31,48.52 L1183.26,48.64 L1183.21,48.77 L1183.16,48.90 L1183.11,49.02 L1183.05,49.15 L1183.00,49.27 L1182.94,49.39 L1182.88,49.52 L1182.82,49.64 L1182.76,49.76 L1182.70,49.88 L1182.64,50.00 L1182.57,50.12 L1182.51,50.24 L1182.44,50.36 L1182.38,50.48 L1182.31,50.60 L1182.24,50.72 L1182.20,50.85 L1182.28,51.06 L1182.48,51.35 L1182.77,51.70 L1183.13,52.10 L1183.52,52.54 L1183.93,53.00 L1184.31,53.46 L1184.64,53.89 L1184.89,54.28 L1185.05,54.61 L1185.09,54.85 L1185.01,55.02 L1184.91,55.16 L1184.80,55.30 L1184.69,55.44 L1184.58,55.58 L1184.46,55.71 L1184.35,55.85 L1184.24,55.98 L1184.12,56.12 L1184.00,56.25 L1183.89,56.38 L1183.77,56.51 L1183.65,56.64 L1183.53,56.77 L1183.40,56.90 L1183.28,57.03 L1183.15,57.15 L1183.03,57.28 L1182.90,57.40 L1182.77,57.53 L1182.64,57.65 L1182.51,57.77 L1182.38,57.89 L1182.25,58.00 L1182.12,58.12 L1181.98,58.24 L1181.85,58.35 L1181.71,58.46 L1181.58,58.58 L1181.44,58.69 L1181.30,58.80 L1181.16,58.91 L1181.02,59.01 L1180.85,59.09 L1180.61,59.05 L1180.28,58.89 L1179.89,58.64 L1179.46,58.31 L1179.00,57.93 L1178.54,57.52 L1178.10,57.13 L1177.70,56.77 L1177.35,56.48 L1177.06,56.28 L1176.85,56.20 L1176.72,56.24 L1176.60,56.31 L1176.48,56.38 L1176.36,56.44 L1176.24,56.51 L1176.12,56.57 L1176.00,56.64 L1175.88,56.70 L1175.76,56.76 L1175.64,56.82 L1175.52,56.88 L1175.39,56.94 L1175.27,57.00 L1175.15,57.05 L1175.02,57.11 L1174.90,57.16 L1174.77,57.21 L1174.64,57.26 L1174.52,57.31 L1174.39,57.36 L1174.26,57.41 L1174.14,57.46 L1174.01,57.51 L1173.88,57.55 L1173.75,57.59 L1173.62,57.64 L1173.49,57.68 L1173.36,57.72 L1173.23,57.76 L1173.10,57.80 L1172.97,57.83 L1172.84,57.87 L1172.71,57.90 L1172.58,57.97 L1172.49,58.18 L1172.43,58.52 L1172.39,58.97 L1172.35,59.51 L1172.32,60.10 L1172.28,60.71 L1172.23,61.30 L1172.16,61.84 L1172.06,62.30 L1171.94,62.64 L1171.80,62.84 L1171.63,62.90 L1171.45,62.93 L1171.27,62.95 L1171.10,62.97 L1170.92,62.99 L1170.75,63.01 L1170.57,63.02 L1170.39,63.04 L1170.22,63.05 L1170.04,63.06 L1169.86,63.07 L1169.69,63.08 L1169.51,63.09 L1169.33,63.09 L1169.15,63.10 L1168.98,63.10 L1168.80,63.10 L1168.62,63.10 L1168.45,63.10 L1168.27,63.09 L1168.09,63.09 L1167.91,63.08 L1167.74,63.07 L1167.56,63.06 L1167.38,63.05 L1167.21,63.04 L1167.03,63.02 L1166.85,63.01 L1166.68,62.99 L1166.50,62.97 L1166.33,62.95 L1166.15,62.93 L1165.97,62.90 L1165.80,62.84 L1165.66,62.64 L1165.54,62.30 L1165.44,61.84 L1165.37,61.30 L1165.32,60.71 L1165.28,60.10 L1165.25,59.51 L1165.21,58.97 L1165.17,58.52 L1165.11,58.18 L1165.02,57.97 L1164.89,57.90 L1164.76,57.87 L1164.63,57.83 L1164.50,57.80 L1164.37,57.76 L1164.24,57.72 L1164.11,57.68 L1163.98,57.64 L1163.85,57.59 L1163.72,57.55 L1163.59,57.51 L1163.46,57.46 L1163.34,57.41 L1163.21,57.36 L1163.08,57.31 L1162.96,57.26 L1162.83,57.21 L1162.70,57.16 L1162.58,57.11 L1162.45,57.05 L1162.33,57.00 L1162.21,56.94 L1162.08,56.88 L1161.96,56.82 L1161.84,56.76 L1161.72,56.70 L1161.60,56.64 L1161.48,56.57 L1161.36,56.51 L1161.24,56.44 L1161.12,56.38 L1161.00,56.31 L1160.88,56.24 L1160.75,56.20 L1160.54,56.28 L1160.25,56.48 L1159.90,56.77 L1159.50,57.13 L1159.06,57.52 L1158.60,57.93 L1158.14,58.31 L1157.71,58.64 L1157.32,58.89 L1156.99,59.05 L1156.75,59.09 L1156.58,59.01 L1156.44,58.91 L1156.30,58.80 L1156.16,58.69 L1156.02,58.58 L1155.89,58.46 L1155.75,58.35 L1155.62,58.24 L1155.48,58.12 L1155.35,58.00 L1155.22,57.89 L1155.09,57.77 L1154.96,57.65 L1154.83,57.53 L1154.70,57.40 L1154.57,57.28 L1154.45,57.15 L1154.32,57.03 L1154.20,56.90 L1154.07,56.77 L1153.95,56.64 L1153.83,56.51 L1153.71,56.38 L1153.60,56.25 L1153.48,56.12 L1153.36,55.98 L1153.25,55.85 L1153.14,55.71 L1153.02,55.58 L1152.91,55.44 L1152.80,55.30 L1152.69,55.16 L1152.59,55.02 L1152.51,54.85 L1152.55,54.61 L1152.71,54.28 L1152.96,53.89 L1153.29,53.46 L1153.67,53.00 L1154.08,52.54 L1154.47,52.10 L1154.83,51.70 L1155.12,51.35 L1155.32,51.06 L1155.40,50.85 L1155.36,50.72 L1155.29,50.60 L1155.22,50.48 L1155.16,50.36 L1155.09,50.24 L1155.03,50.12 L1154.96,50.00 L1154.90,49.88 L1154.84,49.76 L1154.78,49.64 L1154.72,49.52 L1154.66,49.39 L1154.60,49.27 L1154.55,49.15 L1154.49,49.02 L1154.44,48.90 L1154.39,48.77 L1154.34,48.64 L1154.29,48.52 L1154.24,48.39 L1154.19,48.26 L1154.14,48.14 L1154.09,48.01 L1154.05,47.88 L1154.01,47.75 L1153.96,47.62 L1153.92,47.49 L1153.88,47.36 L1153.84,47.23 L1153.80,47.10 L1153.77,46.97 L1153.73,46.84 L1153.70,46.71 L1153.63,46.58 L1153.42,46.49 L1153.08,46.43 L1152.63,46.39 L1152.09,46.35 L1151.50,46.32 L1150.89,46.28 L1150.30,46.23 L1149.76,46.16 L1149.30,46.06 L1148.96,45.94 L1148.76,45.80 L1148.70,45.63 L1148.67,45.45 L1148.65,45.27 L1148.63,45.10 L1148.61,44.92 L1148.59,44.75 L1148.58,44.57 L1148.56,44.39 L1148.55,44.22 L1148.54,44.04 L1148.53,43.86 L1148.52,43.69 L1148.51,43.51 L1148.51,43.33 L1148.50,43.15 L1148.50,42.98 L1148.50,42.80 L1148.50,42.62 L1148.50,42.45 L1148.51,42.27 L1148.51,42.09 L1148.52,41.91 L1148.53,41.74 L1148.54,41.56 L1148.55,41.38 L1148.56,41.21 L1148.58,41.03 L1148.59,40.85 L1148.61,40.68 L1148.63,40.50 L1148.65,40.33 L1148.67,40.15 L1148.70,39.97 L1148.76,39.80 L1148.96,39.66 L1149.30,39.54 L1149.76,39.44 L1150.30,39.37 L1150.89,39.32 L1151.50,39.28 L1152.09,39.25 L1152.63,39.21 L1153.08,39.17 L1153.42,39.11 L1153.63,39.02 L1153.70,38.89 L1153.73,38.76 L1153.77,38.63 L1153.80,38.50 L1153.84,38.37 L1153.88,38.24 L1153.92,38.11 L1153.96,37.98 L1154.01,37.85 L1154.05,37.72 L1154.09,37.59 L1154.14,37.46 L1154.19,37.34 L1154.24,37.21 L1154.29,37.08 L1154.34,36.96 L1154.39,36.83 L1154.44,36.70 L1154.49,36.58 L1154.55,36.45 L1154.60,36.33 L1154.66,36.21 L1154.72,36.08 L1154.78,35.96 L1154.84,35.84 L1154.90,35.72 L1154.96,35.60 L1155.03,35.48 L1155.09,35.36 L1155.16,35.24 L1155.22,35.12 L1155.29,35.00 L1155.36,34.88 L1155.40,34.75 L1155.32,34.54 L1155.12,34.25 L1154.83,33.90 L1154.47,33.50 L1154.08,33.06 L1153.67,32.60 L1153.29,32.14 L1152.96,31.71 L1152.71,31.32 L1152.55,30.99 L1152.51,30.75 L1152.59,30.58 L1152.69,30.44 L1152.80,30.30 L1152.91,30.16 L1153.02,30.02 L1153.14,29.89 L1153.25,29.75 L1153.36,29.62 L1153.48,29.48 L1153.60,29.35 L1153.71,29.22 L1153.83,29.09 L1153.95,28.96 L1154.07,28.83 L1154.20,28.70 L1154.32,28.57 L1154.45,28.45 L1154.57,28.32 L1154.70,28.20 L1154.83,28.07 L1154.96,27.95 L1155.09,27.83 L1155.22,27.71 L1155.35,27.60 L1155.48,27.48 L1155.62,27.36 L1155.75,27.25 L1155.89,27.14 L1156.02,27.02 L1156.16,26.91 L1156.30,26.80 L1156.44,26.69 L1156.58,26.59 L1156.75,26.51 L1156.99,26.55 L1157.32,26.71 L1157.71,26.96 L1158.14,27.29 L1158.60,27.67 L1159.06,28.08 L1159.50,28.47 L1159.90,28.83 L1160.25,29.12 L1160.54,29.32 L1160.75,29.40 L1160.88,29.36 L1161.00,29.29 L1161.12,29.22 L1161.24,29.16 L1161.36,29.09 L1161.48,29.03 L1161.60,28.96 L1161.72,28.90 L1161.84,28.84 L1161.96,28.78 L1162.08,28.72 L1162.21,28.66 L1162.33,28.60 L1162.45,28.55 L1162.58,28.49 L1162.70,28.44 L1162.83,28.39 L1162.96,28.34 L1163.08,28.29 L1163.21,28.24 L1163.34,28.19 L1163.46,28.14 L1163.59,28.09 L1163.72,28.05 L1163.85,28.01 L1163.98,27.96 L1164.11,27.92 L1164.24,27.88 L1164.37,27.84 L1164.50,27.80 L1164.63,27.77 L1164.76,27.73 L1164.89,27.70 L1165.02,27.63 L1165.11,27.42 L1165.17,27.08 L1165.21,26.63 L1165.25,26.09 L1165.28,25.50 L1165.32,24.89 L1165.37,24.30 L1165.44,23.76 L1165.54,23.30 L1165.66,22.96 L1165.80,22.76 L1165.97,22.70 L1166.15,22.67 L1166.33,22.65 L1166.50,22.63 L1166.68,22.61 L1166.85,22.59 L1167.03,22.58 L1167.21,22.56 L1167.38,22.55 L1167.56,22.54 L1167.74,22.53 L1167.91,22.52 L1168.09,22.51 L1168.27,22.51 L1168.45,22.50 L1168.62,22.50Z"/>
<circle fill="none" stroke="#f8e9e9" stroke-width="3.2" stroke-linecap="round" stroke-linejoin="round" stroke-width="2.4" cx="1168.8" cy="42.8" r="10.6"/>
<path fill="none" stroke="#f8e9e9" stroke-width="3.2" stroke-linecap="round" stroke-linejoin="round" stroke-width="1.8" d="M1169.8,35.4 L1163.6,44.2 H1168.4 L1167.4,50.2 L1174,41.2 H1169.1 Z"/>
<rect fill="#f8e9e9" x="1147" y="74.9" width="44" height="3.2" rx="1.6"/>
<circle fill="#a82420" opacity="0.55" cx="655" cy="23.4" r="19.8"/>
<circle fill="#fff" cx="655" cy="23.4" r="15.8"/>
<circle fill="none" stroke="#fff" stroke-width="2.8" cx="2087.5" cy="42" r="24.4"/>
<circle fill="none" stroke="#fff" stroke-width="2.8" cx="2157" cy="42" r="24.4"/>
<circle fill="none" stroke="#fff" stroke-width="2.8" cx="2226.4" cy="42" r="24.4"/>
<path fill="#fff" stroke="#fff" stroke-width="2" stroke-linejoin="round" d="M2081.3,32 L2099.8,42.6 L2081.3,53.3 Z"/>
<path fill="none" stroke="#fff" stroke-width="2.6" stroke-linecap="round" d="M2146.6,38.4 A11.2,11.2 0 0 1 2167.6,36"/>
<path fill="#fff" d="M2170.8,36.6 L2164.2,37.2 L2169.2,31.4 Z"/>
<path fill="none" stroke="#fff" stroke-width="2.6" stroke-linecap="round" d="M2167.8,46.2 A11.2,11.2 0 0 1 2146.6,48.2"/>
<path fill="#fff" d="M2143.6,47.6 L2150.4,47.2 L2145.2,52.8 Z"/>
<path fill="none" stroke="#fff" stroke-width="2.6" stroke-linecap="round" stroke-linejoin="round" d="M2216.2,53.6 L2218.8,49 A10,10 0 1 1 2224.2,53.6 Z"/>
<circle fill="#a82420" opacity="0.55" cx="2241" cy="24.9" r="20"/>
<circle fill="#fff" cx="2241" cy="24.9" r="16.2"/>
<rect x="2279.2" y="16" width="2" height="52" fill="#fff"/>
<circle fill="#f8e9e9" cx="2320.4" cy="42.1" r="12.5"/>
<circle fill="#bc2923" cx="2320.4" cy="38.9" r="4.6"/>
<path fill="#bc2923" d="M2313,48.7 Q2316.5,45.2 2320.4,46.6 Q2324.3,45.2 2327.9,48.7 Q2324.5,52 2320.4,52 Q2316.3,52 2313,48.7 Z"/>
<path fill="#f8e9e9" d="M2810.2,40.8 H2823.6 L2816.9,47.4 Z"/>
</svg>
<div style="position:absolute;will-change:transform;-webkit-text-stroke:0.15px #bc2923;top:12.74px;font-size:21.5px;line-height:24.70px;font-weight:bold;color:#bc2923;white-space:nowrap;letter-spacing:-0.5px;left:-1344.80px;width:4000px;text-align:center;">+9</div>
<div style="position:absolute;will-change:transform;-webkit-text-stroke:0.15px #bc2923;top:15.70px;font-size:19px;line-height:21.83px;font-weight:bold;color:#bc2923;white-space:nowrap;left:240.80px;width:4000px;text-align:center;">2</div>
<div style="position:absolute;will-change:transform;-webkit-text-stroke:0.35px #f8e9e9;top:29.17px;font-size:25px;line-height:28.73px;font-weight:normal;color:#f8e9e9;white-space:nowrap;letter-spacing:0.08px;left:2343.00px;">Örnek Kullanıcı | Örnek GES Yatırımcısı</div>
</div>
</div></body></html>
